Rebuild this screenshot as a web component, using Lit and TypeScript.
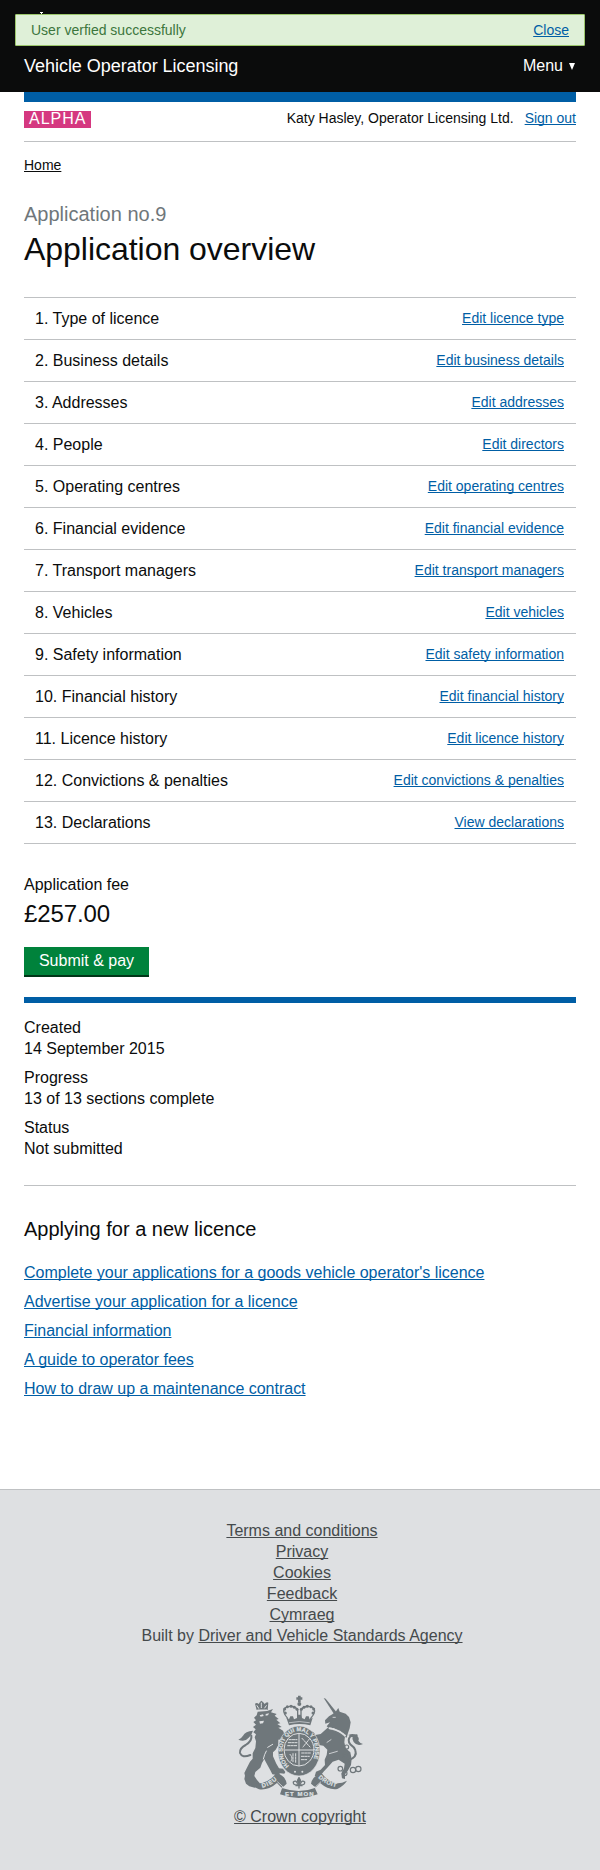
import { LitElement, html, css, svg } from "lit";
import { customElement } from "lit/decorators.js";

const sections: [string, string][] = [
  ["Type of licence", "Edit licence type"],
  ["Business details", "Edit business details"],
  ["Addresses", "Edit addresses"],
  ["People", "Edit directors"],
  ["Operating centres", "Edit operating centres"],
  ["Financial evidence", "Edit financial evidence"],
  ["Transport managers", "Edit transport managers"],
  ["Vehicles", "Edit vehicles"],
  ["Safety information", "Edit safety information"],
  ["Financial history", "Edit financial history"],
  ["Licence history", "Edit licence history"],
  ["Convictions & penalties", "Edit convictions & penalties"],
  ["Declarations", "View declarations"],
];

const facts: [string, string][] = [
  ["Created", "14 September 2015"],
  ["Progress", "13 of 13 sections complete"],
  ["Status", "Not submitted"],
];

const guides = [
  "Complete your applications for a goods vehicle operator's licence",
  "Advertise your application for a licence",
  "Financial information",
  "A guide to operator fees",
  "How to draw up a maintenance contract",
];

const footerLinks = ["Terms and conditions", "Privacy", "Cookies", "Feedback", "Cymraeg"];

const pearls = [
  [181, 84], [179, 72], [187, 65], [198, 64], [208, 67], [216, 73],
  [229, 73], [237, 67], [247, 64], [258, 65], [266, 72], [264, 84],
];

@customElement("royal-crest")
export class RoyalCrest extends LitElement {
  static styles = css`
    :host { display: block; width: 127px; height: 105px; }
    .art { display: block; width: 127px; height: 105px; }
    .ink { fill: #6f777b; }
    .line { fill: none; stroke: #6f777b; stroke-linecap: round; stroke-linejoin: round; }
    .paper { fill: #dee0e2; }
    .rim { fill: #6f777b; stroke: #dee0e2; stroke-width: 2; }
    .cut { fill: none; stroke: #dee0e2; stroke-linecap: round; }
    .motto { fill: #dee0e2; stroke: #dee0e2; stroke-width: .6; font: bold 18px "Liberation Sans", Arial, sans-serif; }
    .small { font-size: 17px; }
  `;

  render() {
    return html`<svg class="art" viewBox="36 30 381 315" aria-hidden="true">
      <!-- crown -->
      <path class="ink" d="M219 32h8v5h5v7h-5v8h-8v-8h-5v-7h5z" />
      <circle class="ink" cx="223" cy="57" r="6" />
      <path class="line" stroke-width="4" d="M188 100Q168 78 182 68Q204 57 218 74V98M257 100Q277 78 263 68Q241 57 228 74V98" />
      ${pearls.map(([x, y]) => svg`<circle class="ink" cx=${x} cy=${y} r="4.5" />`)}
      <path class="ink" d="M184 98l8 5 4-9h8l3 9 9-4 3-10h8l4 10 8 4 4-9h8l3 9 9-5-7 23q-32-8-64 0z" />
      <path class="cut" stroke-width="2" d="M193 113q30-7 60 0" />
      <!-- lion -->
      <path class="ink" d="M90 56q6-4 11 1l4-6 4-4 5 4 5 6q5-7 11-4l-2 22H95z" />
      <path class="cut" stroke-width="3" d="M96 62l5 8M109 54v14M124 62l-5 7M98 75h27" stroke-dasharray="4 2" />
      <path class="ink" d="M98 80l28-2 18-6-6 10 17 5-6 5 12 10-7 2 12 11-9 2 13 9-10 2 14 9 4 10 6 10 0 10-12-4-12 1 0 16-8 14-8 8 0 12 10 22 8 14 12 1 7 10-3 5-12-1-10 5-14-2-6-12-14-26-4-8-7 12-5 14-15 13-3 12 8 12 8 9-1 9-14 5-16-4-10-8-5-14 2-10-2-8 7-14 10-20 8-9 0-16 8-16 2-20-4-12 4-9-8-6 7-9-8-7 9-7-8-8 8-5-6-8 8-7z" />
      <path class="paper" d="M104 91l10-3 2 5-9 2zM122 87l10-2-3 6-7 1zM103 109l14-2-3 8-9 1z" />
      <path class="cut" stroke-width="3" d="M143 178l-15 9M115 222q3-14 9-24" />
      <path class="line" stroke-width="6" d="M76 210Q51 220 45 204Q43 190 62 180Q82 168 79 152" />
      <path class="ink" d="M84 137q-23 2-30 15-4 7-14 12 20 8 31-6 9-7 13-21z" />
      <!-- unicorn -->
      <path class="ink" d="M296 39l6 2 34 42-9 4z" />
      <path class="ink" d="M322 88l10-8 8-11 4 11 18 6 10 10 5 16-3 18-5 14-4 14-46-22-14-12 10-12-14 4-1-10 12-12z" />
      <path class="ink" d="M308 128l52 26-2 18 4 18 14 12 4 20-2 18-10 18-8 10 0 14-9-2-2-14 8-16 2-14-18-12-18 6-16 18-10 11-10 12-18 3 4-14 14-6 13-14-1-16 6-14 2-16-12-12-18-3-5-12-16-6-5 12-13-5 8-14-4-12 10-6 14 6 5 8 16-3z" />
      <path class="cut" stroke-width="6" d="M314 130q26 4 46 22" stroke-dasharray="6 4" />
      <path class="cut" stroke-width="2.5" d="M324 97h7M318 164l-12 8M313 206l24-7" />
      <path class="line" stroke-width="6" d="M370 226Q398 216 391 196Q388 186 376 178Q366 166 376 154L395 151" />
      <path class="ink" d="M370 150q16-8 27 3 7 8 3 14 5 8 14 10-18 8-28-6-6-9-3-14z" />
      <g class="line" stroke-width="3.5">
        <circle cx="365" cy="186" r="6" /><circle cx="360" cy="211" r="6" />
        <circle cx="346" cy="251" r="7" /><circle cx="359" cy="265" r="7" />
        <circle cx="384" cy="255" r="8" /><circle cx="400" cy="252" r="8" />
      </g>
      <!-- garter and shield -->
      <ellipse class="rim" cx="222" cy="198" rx="63" ry="75" />
      <ellipse class="cut" stroke-width="3" cx="222" cy="194" rx="45" ry="49" />
      <path class="cut" stroke-width="3" d="M222 147v94M179 195h86" />
      <path class="cut" stroke-width="3" d="M192 164h24M190 173h26M188 182h28M195 208q10 10 3 20M204 206v24M212 206v26M230 204h26M229 214h24M229 224h16M231 160l24 26M254 161l-20 25" stroke-dasharray="7 3" />
      <path id="garter" fill="none" d="M192 243A49 58 0 1 1 256 238" />
      <text class="motto small"><textPath href="#garter" textLength="244">HONI SOIT QUI MAL Y PENSE</textPath></text>
      <circle class="paper" cx="210" cy="260" r="3" /><circle class="paper" cx="232" cy="260" r="3" />
      <!-- ribbon -->
      <path class="ink" d="M75 290q10 15 27 23 28 4 54-19l15 16-6 18q57 22 113 0l-8-18 15-16q26 22 52 18 20-10 29-25-20 10-35 7-24-6-41-29-28 8-32 31l14 12q-49 19-101 1l14-13q-4-25-31-32-17 23-42 30-17 2-37-4z" />
      <path class="cut" stroke-width="2.5" d="M158 291l15 14M287 291l-15 14M170 309q8-1 14-7M274 308q-8-1-14-7" />
      <path id="dieu" fill="none" d="M112 308Q139 303 163 277" />
      <path id="droit" fill="none" d="M279 278Q306 304 344 307" />
      <text class="motto"><textPath href="#dieu" textLength="51">DIEU</textPath></text>
      <text class="motto"><textPath href="#droit" textLength="62">DROIT</textPath></text>
      <text class="motto" x="180" y="332" textLength="86">ET MON</text>
      <path class="line" stroke-width="4" d="M222 278v31M213 302h18M219 299q-15 3-14-8 7-7 12 4M225 299q15 3 14-8-7-7-12 4" />
      <path class="ink" d="M222 276q13 13 0 23-13-10 0-23z" />
    </svg>`;
  }
}

@customElement("app-root")
export class AppRoot extends LitElement {
  static styles = css`
    :host { display: block; min-height: 1870px; background: #fff; color: #0b0c0c; font: 16px/21px "Liberation Sans", Arial, sans-serif; position: relative; }
    * { box-sizing: border-box; }
    a { color: #005ea5; text-decoration: underline; text-decoration-skip-ink: none; text-decoration-thickness: 1px; }
    h1, h2, p, ul, ol, dl, dd { margin: 0; padding: 0; font-weight: normal; }
    ul, ol { list-style: none; }
    .header { height: 92px; padding: 0 24px; background: #0b0c0c; color: #fff; position: relative; display: flex; justify-content: space-between; align-items: flex-end; }
    .crown { position: absolute; left: 31px; top: 11px; width: 28px; height: 6px; }
    .service { font-size: 18px; line-height: 24px; padding-bottom: 14px; letter-spacing: -0.03px; }
    .menu { display: flex; align-items: center; gap: 6px; padding-bottom: 16px; padding-right: 1px; line-height: 21px; }
    .arrow { width: 6px; height: 7px; margin-top: 2px; }
    .alert { position: absolute; left: 15px; top: 14px; width: 570px; height: 32px; padding: 0 15px; border: 1px solid #9bc66b; border-radius: 1px; background: #dff0d8; color: #3c763d; display: flex; justify-content: space-between; font-size: 14px; line-height: 30px; }
    .page { padding: 0 24px; }
    .phase { border-top: 10px solid #005ea5; border-bottom: 1px solid #bfc1c3; height: 50px; display: flex; justify-content: space-between; padding-top: 9px; font-size: 14px; line-height: 17px; }
    .tag { height: 17px; width: 67px; padding-left: 5px; background: #d53880; color: #fff; font-size: 16px; line-height: 15px; letter-spacing: 1px; }
    .user { display: flex; gap: 11px; line-height: 14px; }
    .crumbs { padding-top: 13px; font-size: 14px; line-height: 20px; }
    .crumbs a { color: #0b0c0c; }
    .number { padding-top: 27px; font-size: 20px; line-height: 25px; color: #6f777b; }
    .title { font-size: 32px; line-height: 40px; padding: 2px 0 28px; letter-spacing: -0.03px; }
    .sections { border-top: 1px solid #bfc1c3; }
    .row { height: 42px; border-bottom: 1px solid #bfc1c3; padding: 0 12px 0 11px; display: flex; justify-content: space-between; line-height: 41px; }
    .row a { font-size: 14px; }
    .fee-label { padding-top: 30px; }
    .fee { font-size: 24px; line-height: 30px; padding-top: 4px; letter-spacing: -0.1px; }
    .submit { display: block; margin: 18px 0 20px; border: 0; border-radius: 0; width: 125px; height: 30px; background: #00823b; box-shadow: inset 0 -2px #003618; color: #fff; font: inherit; line-height: 21px; padding: 0 0 4px; }
    .facts { border-top: 6px solid #005ea5; border-bottom: 1px solid #bfc1c3; padding-top: 14px; height: 189px; display: flex; flex-direction: column; gap: 8px; }
    .guide-title { font-size: 20px; line-height: 25px; padding-top: 31px; }
    .guides { display: flex; flex-direction: column; gap: 8px; padding-top: 20px; letter-spacing: -0.01px; }
    .footer { margin-top: 90px; height: 381px; border-top: 1px solid #bfc1c3; background: #dee0e2; color: #454a4c; padding-top: 30px; display: flex; flex-direction: column; align-items: center; }
    .footer a { color: #454a4c; }
    .meta { text-align: center; padding-left: 4px; }
    .crest { margin-top: 49px; }
    .copyright { padding-top: 6px; }
  `;

  render() {
    return html`
      <header class="header">
        <svg class="crown" viewBox="0 0 28 6"><path fill="#fff" d="M9 1h3v1h-1v1h-1V2H9z" /></svg>
        <span class="service">Vehicle Operator Licensing</span>
        <span class="menu"><span>Menu</span><svg class="arrow" viewBox="0 0 6 7"><path fill="#fff" d="M0 0h6L3 7z" /></svg></span>
      </header>
      <div class="alert" role="alert"><span>User verfied successfully</span><a>Close</a></div>
      <main class="page">
        <div class="phase">
          <span class="tag">ALPHA</span>
          <span class="user"><span>Katy Hasley, Operator Licensing Ltd.</span><a>Sign out</a></span>
        </div>
        <nav class="crumbs"><a>Home</a></nav>
        <p class="number">Application no.9</p>
        <h1 class="title">Application overview</h1>
        <ol class="sections">
          ${sections.map(([name, link], i) => html`<li class="row"><span>${i + 1}. ${name}</span><a>${link}</a></li>`)}
        </ol>
        <p class="fee-label">Application fee</p>
        <p class="fee">£257.00</p>
        <button class="submit">Submit &amp; pay</button>
        <dl class="facts">
          ${facts.map(([term, value]) => html`<div><dt>${term}</dt><dd>${value}</dd></div>`)}
        </dl>
        <h2 class="guide-title">Applying for a new licence</h2>
        <ul class="guides">${guides.map((g) => html`<li><a>${g}</a></li>`)}</ul>
      </main>
      <footer class="footer">
        <ul class="meta">
          ${footerLinks.map((l) => html`<li><a>${l}</a></li>`)}
          <li>Built by <a>Driver and Vehicle Standards Agency</a></li>
        </ul>
        <royal-crest class="crest"></royal-crest>
        <p class="copyright"><a>© Crown copyright</a></p>
      </footer>
    `;
  }
}
